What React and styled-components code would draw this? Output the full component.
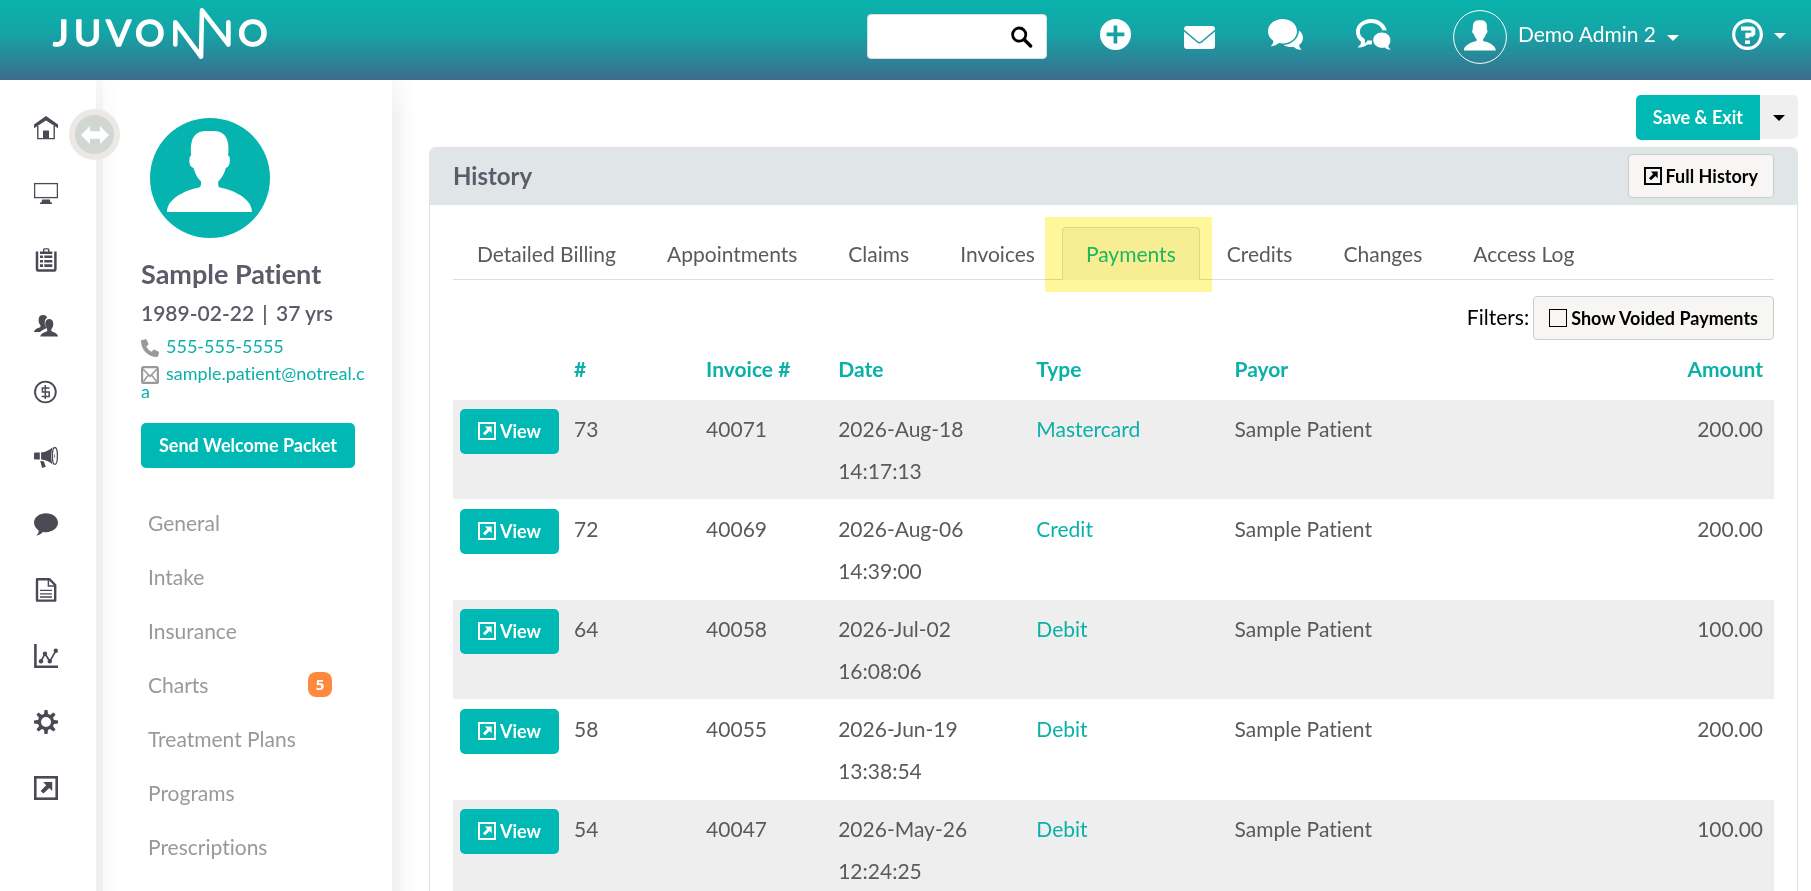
import { useState } from 'react';
import styled, { createGlobalStyle } from 'styled-components';

const teal = '#00b9b5';
const tealText = '#0bb0a9';
const iconColor = '#4a4a55';

const railItems = ['home', 'monitor', 'clipboard', 'users', 'dollar', 'megaphone', 'comment', 'document', 'chart', 'gear', 'external'];

const navItems = [
  { label: 'General' },
  { label: 'Intake' },
  { label: 'Insurance' },
  { label: 'Charts', count: 5 },
  { label: 'Treatment Plans' },
  { label: 'Programs' },
  { label: 'Prescriptions' },
];

const tabs = ['Detailed Billing', 'Appointments', 'Claims', 'Invoices', 'Payments', 'Credits', 'Changes', 'Access Log'];

const payments = [
  { id: 73, invoice: 40071, date: '2026-Aug-18', time: '14:17:13', type: 'Mastercard', payor: 'Sample Patient', amount: '200.00' },
  { id: 72, invoice: 40069, date: '2026-Aug-06', time: '14:39:00', type: 'Credit', payor: 'Sample Patient', amount: '200.00' },
  { id: 64, invoice: 40058, date: '2026-Jul-02', time: '16:08:06', type: 'Debit', payor: 'Sample Patient', amount: '100.00' },
  { id: 58, invoice: 40055, date: '2026-Jun-19', time: '13:38:54', type: 'Debit', payor: 'Sample Patient', amount: '200.00' },
  { id: 54, invoice: 40047, date: '2026-May-26', time: '12:24:25', type: 'Debit', payor: 'Sample Patient', amount: '100.00' },
];

const railDrawings = {
  home: (
    <>
      <path d='M12 0L24 8.4V12.2L12 4.4L0 12.2V8.4Z' />
      <path d='M3.8 10V22.6H20.2V10' fill='none' stroke='currentColor' strokeWidth='1.4' />
      <path d='M9 14.5H15V23H9Z' />
    </>
  ),
  monitor: (
    <>
      <rect x='0.6' y='1.6' width='22.8' height='14' fill='none' stroke='currentColor' strokeWidth='1.3' />
      <path d='M8.2 17.5H15.8L16.6 20.5H18V21.9H6V20.5H7.4Z' />
    </>
  ),
  clipboard: (
    <>
      <path d='M3 3.5V21.5Q3 22.6 4.2 22.6H20.2Q21.4 22.6 21.4 21.5V3.5' fill='none' stroke='currentColor' strokeWidth='2.5' />
      <path d='M6 3.5H9V1.8Q9 0.3 10.4 0.3H14Q15.4 0.3 15.4 1.8V3.5H18.3V6H6ZM10.4 1.6V3.5H14V1.6Z' fillRule='evenodd' />
      <path d='M6 7.6H9V10.1H6ZM10.3 7.6H18.3V10.1H10.3ZM6 11.9H9V14.4H6ZM10.3 11.9H18.3V14.4H10.3ZM6 16.3H9V19H6ZM10.3 16.3H18.3V19H10.3Z' />
    </>
  ),
  users: (
    <>
      <path d='M0 18C0 15.5 3.5 14.3 6 13.2C7 12.7 6.6 11.3 5.9 10.4C4.6 9 4.3 6.5 4.8 4.4C5.2 2 6.9 1 9 1C11 1 12.6 1.8 13 3.6C10.8 5.5 10.3 8.3 11 11.3C11.3 13 12.6 13.6 11.8 14.6C9.3 15.8 7 16.6 6.3 18Z' />
      <path d='M6.3 22.6C6.5 19.5 10 18.7 12.6 17.5C13.8 16.9 13.4 15.6 12.7 14.6C11.3 13 11 10.5 11.4 8.6C11.8 6 13.2 4.9 15.3 4.9C17.4 4.9 18.8 6 19.1 8.6C19.5 10.5 19.2 13 17.8 14.6C17.1 15.6 16.8 16.9 18 17.5C20.6 18.7 23.9 19.5 24 22.6Z' />
    </>
  ),
  dollar: (
    <>
      <circle cx='11.4' cy='12' r='10.4' fill='none' stroke='currentColor' strokeWidth='1.9' />
      <path d='M15.6 8H8.4V12H15.2V16.4H7.6M11.3 5V19' fill='none' stroke='currentColor' strokeWidth='1.5' />
    </>
  ),
  megaphone: (
    <>
      <path d='M0 8Q0 6.6 1.4 6.6H5.8V13.6H1.4Q0 13.6 0 12.2Z' />
      <path d='M7.1 6.5C11.5 6 15.5 4 18.6 1.2C16.9 6.5 16.9 14 18.6 18.4C15.5 15.8 11.5 14 7.1 13.6Z' />
      <ellipse cx='20.9' cy='9.9' rx='2.5' ry='8.4' fill='none' stroke='currentColor' strokeWidth='1.3' />
      <path d='M20 7.2Q21.8 9.9 20 12.4Z' />
      <path d='M6.2 14.9L9.8 15.3L11.8 20.8L8.2 22Z' />
    </>
  ),
  comment: <path d='M12 1.2C18.6 1.2 24 5.3 24 10.6C24 16 18.6 20.2 12 20.2C10.9 20.2 9.8 20.1 8.8 19.9C7.1 22 4.6 23.4 2 23.6C3.7 22.2 4.7 20.8 4.7 18.4C1.8 16.6 0 13.8 0 10.6C0 5.3 5.4 1.2 12 1.2Z' />,
  document: (
    <>
      <path d='M3 1.2H15.4L21.2 7V22.6H3Z' fill='none' stroke='currentColor' strokeWidth='2.4' strokeLinejoin='round' />
      <path d='M14.4 2V8H21' fill='none' stroke='currentColor' strokeWidth='1.5' />
      <path d='M6 12.4H18M6 15.8H18M6 19H18' fill='none' stroke='currentColor' strokeWidth='1.3' />
    </>
  ),
  chart: (
    <>
      <path d='M1.4 0V22.8H24' fill='none' stroke='currentColor' strokeWidth='2.6' />
      <path d='M7 17.3L11 9.7L15.8 17.3L21.8 6.8' fill='none' stroke='currentColor' strokeWidth='1.7' />
      <circle cx='7' cy='17.3' r='2.2' />
      <circle cx='11' cy='9.7' r='2.2' />
      <circle cx='15.8' cy='17.3' r='2.2' />
      <circle cx='21.8' cy='6.8' r='2.2' />
    </>
  ),
  gear: (
    <>
      <circle cx='12' cy='12' r='6.6' fill='none' stroke='currentColor' strokeWidth='3.2' />
      {[0, 45, 90, 135, 180, 225, 270, 315].map(angle => (
        <path key={angle} d='M9.8 5.5L10.5 0H13.5L14.2 5.5Z' transform={`rotate(${angle} 12 12)`} />
      ))}
    </>
  ),
  external: (
    <>
      <rect x='1.3' y='1.3' width='21.4' height='21.4' fill='none' stroke='currentColor' strokeWidth='2.6' />
      <path d='M9.2 6H18.2V15L15.3 12.1L9.4 17.6L6.6 14.9L12.2 9.2Z' />
    </>
  ),
};

const RailIcon = ({ name, size = 24 }) => (
  <svg width={size} height={size} viewBox='0 0 24 24' fill='currentColor' aria-hidden='true'>
    {railDrawings[name]}
  </svg>
);

const Person = () => (
  <path d='M17 94C17 82 32 73 49 69.5C51 69 51.2 66 51 63.5C47 60 44.5 54 43.5 50C40.5 49 39 46 39.3 42C39.4 39.5 40 38 41.2 37.5C40.5 33 40.8 27 41.8 23.5C43.5 16.5 49 13 55 13H64.5C71 13 76 16.5 77.6 23.5C78.6 27 78.8 33 78 37.5C79.3 38 79.9 39.5 79.9 42C80 46 78.5 49 75.8 50C75 54 72 60 68.3 63.5C68 66 68 69 70 69.5C87 73 102 82 102 94Z' fill='#fff' />
);

const Logo = () => (
  <svg width='217' height='51' viewBox='0 0 217 51' role='img' aria-label='Juvonno'>
    <g fill='#fff' stroke='#fff' strokeWidth='1.4' strokeLinejoin='round' fontFamily='Lato, sans-serif' fontSize='37' fontWeight='500'>
      <text x='1 22 54 83' y='38'>
        JUVO
      </text>
      <text x='186' y='38'>
        O
      </text>
    </g>
    <path d='M123.3 36.5V14.2L149 48.6L150 2.4L176.4 36.5V14.2' fill='none' stroke='#fff' strokeWidth='4.6' strokeLinecap='round' strokeLinejoin='round' />
  </svg>
);

const App = () => {
  const [activeTab, setActiveTab] = useState('Payments');
  const [showVoided, setShowVoided] = useState(false);

  return (
    <>
      <GlobalStyle />
      <Shell>
        <Header>
          <LogoLink href='#'>
            <Logo />
          </LogoLink>
          <HeaderTools>
            <SearchBox>
              <input type='text' aria-label='Search' />
              <button type='button' aria-label='Run search'>
                <svg width='22' height='22' viewBox='0 0 22 22' fill='none' stroke='#000'>
                  <circle cx='8.2' cy='8.6' r='6.6' strokeWidth='2.8' />
                  <path d='M13.4 13.8L19.6 20' strokeWidth='3.4' strokeLinecap='round' />
                </svg>
              </button>
            </SearchBox>
            <HeaderButton type='button' aria-label='Add'>
              <svg width='31' height='31' viewBox='0 0 31 31'>
                <path fill='#fff' fillRule='evenodd' d='M15.5 0A15.5 15.5 0 1 1 15.5 31A15.5 15.5 0 1 1 15.5 0ZM13.6 6.4V13.6H6.6V17.2H13.6V24.6H17.3V17.2H24.4V13.6H17.3V6.4Z' />
              </svg>
            </HeaderButton>
            <HeaderButton type='button' aria-label='Mail'>
              <svg width='31' height='31' viewBox='0 0 31 31' fill='#fff'>
                <path d='M0 10.6V10Q0 7 3 7H28Q31 7 31 10V10.6L17.2 22.2Q15.5 23.6 13.8 22.2Z' />
                <path d='M0 12.6L13.4 23.7Q15.5 25.3 17.6 23.7L31 12.6V27Q31 30 28 30H3Q0 30 0 27Z' />
              </svg>
            </HeaderButton>
            <HeaderButton type='button' aria-label='Messages'>
              <svg width='35' height='31' viewBox='0 0 35 31' fill='#fff'>
                <path d='M14.6 0C22.6 0 29 5.4 29 12.2C29 19 22.6 24.5 14.6 24.5C13.2 24.5 12 24.4 11 24.1C8.6 26.2 5.6 27.3 2.4 27.2C4.4 25.6 5.6 23.7 5.3 21.8C2 19.6 0 16.2 0 12.2C0 5.4 6.5 0 14.6 0Z' />
                <path d='M31 11.5C33.5 13.4 35 16 35 18.9C35 21.7 33.6 24.1 31.3 25.8C31 27.5 31.9 29.3 33.6 30.8C30.4 31 27.6 30 25.6 27.8C21.9 28.4 18.2 27.6 15.4 25.9C24 25.6 30.8 19.6 31 11.5Z' />
              </svg>
            </HeaderButton>
            <HeaderButton type='button' aria-label='Chat'>
              <svg width='35' height='31' viewBox='0 0 35 31' fill='#fff'>
                <path d='M15 0C22.8 0 29.2 4.7 30.7 11.4C29.3 11.1 27.8 11.1 26.5 11.4C25 7 20.5 4 15 4C8.6 4 3.9 7.9 3.9 12.8C3.9 15.9 5.7 18.4 8.6 20C9.4 21.6 9.2 23.2 8.4 24.6C9.8 24 11 22.6 11.7 21.3C13.2 21.7 14.6 21.6 16 21.5V25.3C14.9 25.5 13.3 25.4 12 25.2C9.3 27.4 5.6 28.8 1.6 28.4C3.7 26.9 5.3 24.6 5 22.8C1.9 20.6 0 17 0 12.8C0 5.6 6.7 0 15 0Z' />
                <path d='M25.9 13.4C30.7 13.4 34.4 16.8 34.4 21C34.4 23.6 33.4 25.6 32.3 26.8C32.3 28.4 33.4 29.8 35 30.4C32.7 31 30.6 30.3 29.1 28.5C22.6 29.8 17.2 26.4 17.2 21C17.2 16.8 21 13.4 25.9 13.4Z' />
              </svg>
            </HeaderButton>
            <UserMenu type='button'>
              <svg width='54' height='54' viewBox='-12 -14 144 144'>
                <circle cx='60' cy='58' r='70.5' fill='none' stroke='#fff' strokeWidth='2.6' />
                <Person />
              </svg>
              <span>Demo Admin 2</span>
              <Caret />
            </UserMenu>
            <HeaderButton type='button' aria-label='Help'>
              <svg width='31' height='31' viewBox='0 0 31 31' fill='none' stroke='#fff'>
                <circle cx='15.5' cy='15.5' r='13.8' strokeWidth='3.2' />
                <path d='M9 9.6H20.3L21.3 10.4V14.6L19.9 15.8H15.4V19.2' strokeWidth='4' />
                <path d='M13 21.4H18V25H13Z' fill='#fff' stroke='none' />
              </svg>
              <Caret />
            </HeaderButton>
          </HeaderTools>
        </Header>

        <Body>
          <Rail aria-label='Main'>
            {railItems.map(name => (
              <a key={name} href='#' aria-label={name}>
                <RailIcon name={name} />
              </a>
            ))}
            <Toggle type='button' aria-label='Toggle sidebar'>
              <svg width='28' height='18' viewBox='0 0 28 18' fill='#fff'>
                <path d='M0 9L9 0V5.2H19V0L28 9L19 18V12.8H9V18Z' />
              </svg>
            </Toggle>
          </Rail>

          <Sidebar>
            <Avatar width='120' height='120' viewBox='0 0 120 120'>
              <circle cx='60' cy='60' r='60' fill='#06b4af' />
              <Person />
            </Avatar>
            <PatientName>Sample Patient</PatientName>
            <PatientBirth>
              1989-02-22 <span>|</span> 37 yrs
            </PatientBirth>
            <Contact>
              <svg width='18' height='18' viewBox='0 0 18 18' fill='#999'>
                <path d='M0.3 1.2L4.6 0.2Q5.4 0 5.7 0.8L7.4 4.8Q7.6 5.5 7.1 6L5.2 7.5Q7 11 10.6 12.8L12.2 10.9Q12.7 10.4 13.4 10.7L17.4 12.4Q18.1 12.8 18 13.5L17 17.3Q16.8 18 16 18C7.2 18 0 10.8 0 2Q0 1.4 0.3 1.2Z' />
              </svg>
              <a href='#'>555-555-5555</a>
            </Contact>
            <Contact>
              <svg width='18' height='18' viewBox='0 0 18 18' fill='none' stroke='#999'>
                <rect x='1.1' y='1.1' width='15.8' height='15.8' rx='1.5' strokeWidth='2.2' />
                <path d='M2 3L9 10.3L16 3M2.5 15.5L7 9.5M15.5 15.5L11 9.5' strokeWidth='1.5' />
              </svg>
              <a href='#'>sample.patient@notreal.ca</a>
            </Contact>
            <WelcomeButton type='button'>Send Welcome Packet</WelcomeButton>
            <PatientNav>
              {navItems.map(({ label, count }) => (
                <li key={label}>
                  <a href='#'>{label}</a>
                  {count && <Badge>{count}</Badge>}
                </li>
              ))}
            </PatientNav>
          </Sidebar>

          <Main>
            <Actions>
              <SaveButton type='button'>Save &amp; Exit</SaveButton>
              <SaveMenu type='button' aria-label='More save options'>
                <Caret />
              </SaveMenu>
            </Actions>
            <Panel>
              <PanelHeader>
                <h2>History</h2>
                <LightButton type='button'>
                  <RailIcon name='external' size={18} />
                  Full History
                </LightButton>
              </PanelHeader>
              <PanelBody>
                <Tabs role='tablist'>
                  {tabs.map(tab => (
                    <Tab key={tab} type='button' role='tab' aria-selected={activeTab === tab} $active={activeTab === tab} onClick={() => setActiveTab(tab)}>
                      {tab}
                      {tab === 'Payments' && <Highlight />}
                    </Tab>
                  ))}
                </Tabs>
                <Filters>
                  <span>Filters:</span>
                  <VoidedFilter>
                    <input type='checkbox' checked={showVoided} onChange={e => setShowVoided(e.target.checked)} />
                    Show Voided Payments
                  </VoidedFilter>
                </Filters>
                <Table>
                  <colgroup>
                    <Col $width='110px' />
                    <Col $width='10%' />
                    <Col $width='10%' />
                    <Col $width='15%' />
                    <Col $width='15%' />
                    <Col />
                  </colgroup>
                  <thead>
                    <tr>
                      <td />
                      <th>#</th>
                      <th>Invoice #</th>
                      <th>Date</th>
                      <th>Type</th>
                      <th>
                        <Split>
                          <span>Payor</span>
                          <span>Amount</span>
                        </Split>
                      </th>
                    </tr>
                  </thead>
                  <tbody>
                    {payments.map(payment => (
                      <tr key={payment.id}>
                        <ActionCell>
                          <ViewButton type='button'>
                            <RailIcon name='external' size={18} />
                            View
                          </ViewButton>
                        </ActionCell>
                        <td>{payment.id}</td>
                        <td>{payment.invoice}</td>
                        <td>
                          {payment.date}
                          <br />
                          {payment.time}
                        </td>
                        <td>
                          <a href='#'>{payment.type}</a>
                        </td>
                        <td>
                          <Split>
                            <span>{payment.payor}</span>
                            <span>{payment.amount}</span>
                          </Split>
                        </td>
                      </tr>
                    ))}
                  </tbody>
                </Table>
              </PanelBody>
            </Panel>
          </Main>
        </Body>
      </Shell>
    </>
  );
};

const GlobalStyle = createGlobalStyle`
  * {
    box-sizing: border-box;
  }
  body {
    margin: 0;
    background-color: #fff;
    font-family: Lato, 'Liberation Sans', sans-serif;
    font-size: 21px;
    font-variant-ligatures: none;
    color: #5a5a5a;
  }
  a {
    color: ${tealText};
    text-decoration: none;
  }
  button {
    padding: 0;
    border: none;
    background: none;
    font-family: inherit;
    color: inherit;
    cursor: pointer;
  }
  svg {
    display: block;
    flex-shrink: 0;
  }
`;

const Shell = styled.div`
  display: flex;
  flex-direction: column;
  height: 100vh;
  overflow: hidden;
`;

const Header = styled.header`
  display: flex;
  align-items: center;
  justify-content: space-between;
  flex-shrink: 0;
  height: 80px;
  padding: 0 25px 11px 52px;
  background: linear-gradient(#08b3ac, #15a5a6 40%, #3c6d8e);
  color: #fff;
`;

const LogoLink = styled.a`
  display: block;
  margin-bottom: 2px;
`;

const HeaderTools = styled.div`
  display: flex;
  align-items: center;
  gap: 53px;
`;

const SearchBox = styled.div`
  display: flex;
  align-items: center;
  width: 180px;
  height: 45px;
  margin-top: 4px;
  padding-right: 13px;
  border: 1px solid #d5dde5;
  border-radius: 4px;
  background-color: #fff;
  input {
    flex: 1;
    min-width: 0;
    height: 100%;
    padding: 0 10px;
    border: none;
    outline: none;
    background: none;
    font: inherit;
  }
`;

const HeaderButton = styled.button`
  display: flex;
  align-items: center;
  gap: 11px;
`;

const UserMenu = styled.button`
  display: flex;
  align-items: center;
  gap: 11px;
  margin: 4px 0 0 9px;
  font-size: 21px;
  span {
    padding-bottom: 7px;
  }
`;

const Caret = styled.i`
  margin-top: 2px;
  border: 6px solid transparent;
  border-top-color: currentColor;
  border-bottom: none;
`;

const Body = styled.div`
  display: flex;
  flex: 1;
  min-height: 0;
`;

const Rail = styled.nav`
  position: relative;
  display: flex;
  flex-direction: column;
  align-items: center;
  flex-shrink: 0;
  gap: 42px;
  width: 96px;
  padding: 36px 4px 0 0;
  a {
    color: ${iconColor};
  }
`;

const Toggle = styled.button`
  position: absolute;
  top: 29px;
  right: -24px;
  display: flex;
  align-items: center;
  justify-content: center;
  width: 51px;
  height: 51px;
  border: 6px solid #ece8e6;
  border-radius: 50%;
  background-color: #d2d7d3;
`;

const Sidebar = styled.aside`
  flex-shrink: 0;
  width: 296px;
  padding: 38px 24px 0 45px;
  background:
    linear-gradient(rgba(255, 255, 255, 0.6), rgba(255, 255, 255, 0) 40px),
    linear-gradient(to right, #f0f0f0 7px, #f9f9f9 7px, #fff 22px);
`;

const Avatar = styled.svg`
  margin-left: 9px;
`;

const PatientName = styled.h1`
  margin: 20px 0 0;
  font-size: 27px;
  font-weight: 700;
  line-height: 32px;
  color: #5c5c69;
`;

const PatientBirth = styled.p`
  margin: 10px 0 11px;
  font-size: 21px;
  font-weight: 600;
  line-height: 26px;
  color: #5c5c69;
  span {
    margin: 0 3px;
  }
`;

const Contact = styled.p`
  margin: 0 0 9px;
  font-size: 18px;
  line-height: 18px;
  word-break: break-all;
  svg {
    display: inline-block;
    margin: -4px 7px -4px 0;
    vertical-align: middle;
  }
`;

const PrimaryButton = styled.button`
  height: 45px;
  padding: 0 18px 1px;
  border-radius: 5px;
  background-color: ${teal};
  font-size: 18px;
  font-weight: 700;
  color: #fff;
`;

const WelcomeButton = styled(PrimaryButton)`
  margin-top: 14px;
`;

const PatientNav = styled.ul`
  margin: 27px 0 0;
  padding: 0 36px 0 7px;
  list-style: none;
  li {
    display: flex;
    align-items: center;
    justify-content: space-between;
    height: 54px;
  }
  a {
    color: #999;
  }
`;

const Badge = styled.span`
  width: 24px;
  border-radius: 8px;
  background-color: #ff8a3d;
  font-family: 'Open Sans', sans-serif;
  font-size: 15px;
  font-weight: 700;
  line-height: 25px;
  text-align: center;
  color: #fff;
`;

const Main = styled.main`
  flex: 1;
  min-width: 0;
  padding: 15px 13px 0 37px;
  background:
    linear-gradient(rgba(255, 255, 255, 0.6), rgba(255, 255, 255, 0) 40px),
    linear-gradient(to right, #f0f0f0, #f3f3f3 6px, #fafafa 12px, #fff 24px);
`;

const Actions = styled.div`
  display: flex;
  justify-content: flex-end;
`;

const SaveButton = styled(PrimaryButton)`
  padding: 0 17px 1px;
  border-radius: 5px 0 0 5px;
`;

const SaveMenu = styled.button`
  display: flex;
  align-items: center;
  justify-content: center;
  width: 38px;
  height: 44px;
  border-radius: 0 5px 5px 0;
  background-color: #efefef;
  color: #000;
`;

const Panel = styled.section`
  margin-top: 7px;
  border: 1px solid #e0e4e7;
  border-radius: 6px 6px 0 0;
`;

const PanelHeader = styled.div`
  display: flex;
  align-items: center;
  justify-content: space-between;
  height: 57px;
  padding: 0 23px 2px;
  border-radius: 5px 5px 0 0;
  background-color: #e0e5e8;
  h2 {
    margin: 0;
    font-size: 24px;
    font-weight: 700;
    color: #5c5c69;
  }
`;

const LightButton = styled.button`
  display: flex;
  align-items: center;
  gap: 4px;
  height: 44px;
  padding: 0 15px;
  border: 1px solid #ccc;
  border-radius: 4px;
  background-color: #f7f6f5;
  font-size: 18px;
  font-weight: 700;
  color: #000;
`;

const PanelBody = styled.div`
  padding: 22px 23px 0;
`;

const Tabs = styled.div`
  display: flex;
  gap: 3px;
  border-bottom: 1px solid #ddd;
`;

const Tab = styled.button`
  position: relative;
  height: 53px;
  margin-bottom: -1px;
  padding: 0 23px 2px;
  border: 1px solid ${({ $active }) => ($active ? '#ddd' : 'transparent')};
  border-bottom: none;
  border-radius: 4px 4px 0 0;
  background-color: ${({ $active }) => ($active ? '#f7f6f5' : 'transparent')};
  font-size: 21px;
  color: ${({ $active }) => ($active ? '#1cbb9f' : 'inherit')};
`;

const Highlight = styled.span`
  position: absolute;
  inset: -11px -13px -12px -18px;
  background-color: #fff799;
  mix-blend-mode: multiply;
  pointer-events: none;
`;

const Filters = styled.div`
  display: flex;
  align-items: center;
  justify-content: flex-end;
  gap: 4px;
  margin-top: 16px;
  color: #000;
  > span {
    padding-bottom: 4px;
  }
`;

const VoidedFilter = styled(LightButton).attrs({ as: 'label' })`
  input {
    appearance: none;
    width: 18px;
    height: 18px;
    margin: 0;
    border: 1px solid #000;
    &:checked {
      background-color: ${teal};
    }
  }
`;

const Table = styled.table`
  width: 100%;
  margin-top: 8px;
  border-collapse: collapse;
  table-layout: fixed;
  th {
    padding: 0 11px 9px;
    font-weight: 700;
    line-height: 42px;
    text-align: left;
    color: ${tealText};
  }
  tbody td {
    padding: 8px 11px 7px;
    border-top: 1px solid #fff;
    line-height: 42px;
    vertical-align: top;
  }
  tbody tr:nth-child(odd) {
    background-color: #eee;
  }
`;

const Col = styled.col`
  width: ${({ $width }) => $width || 'auto'};
`;

const Split = styled.div`
  display: flex;
  justify-content: space-between;
`;

const ActionCell = styled.td`
  && {
    padding: 9px 0 0 7px;
  }
`;

const ViewButton = styled(PrimaryButton)`
  display: flex;
  align-items: center;
  gap: 4px;
`;

export default App;
